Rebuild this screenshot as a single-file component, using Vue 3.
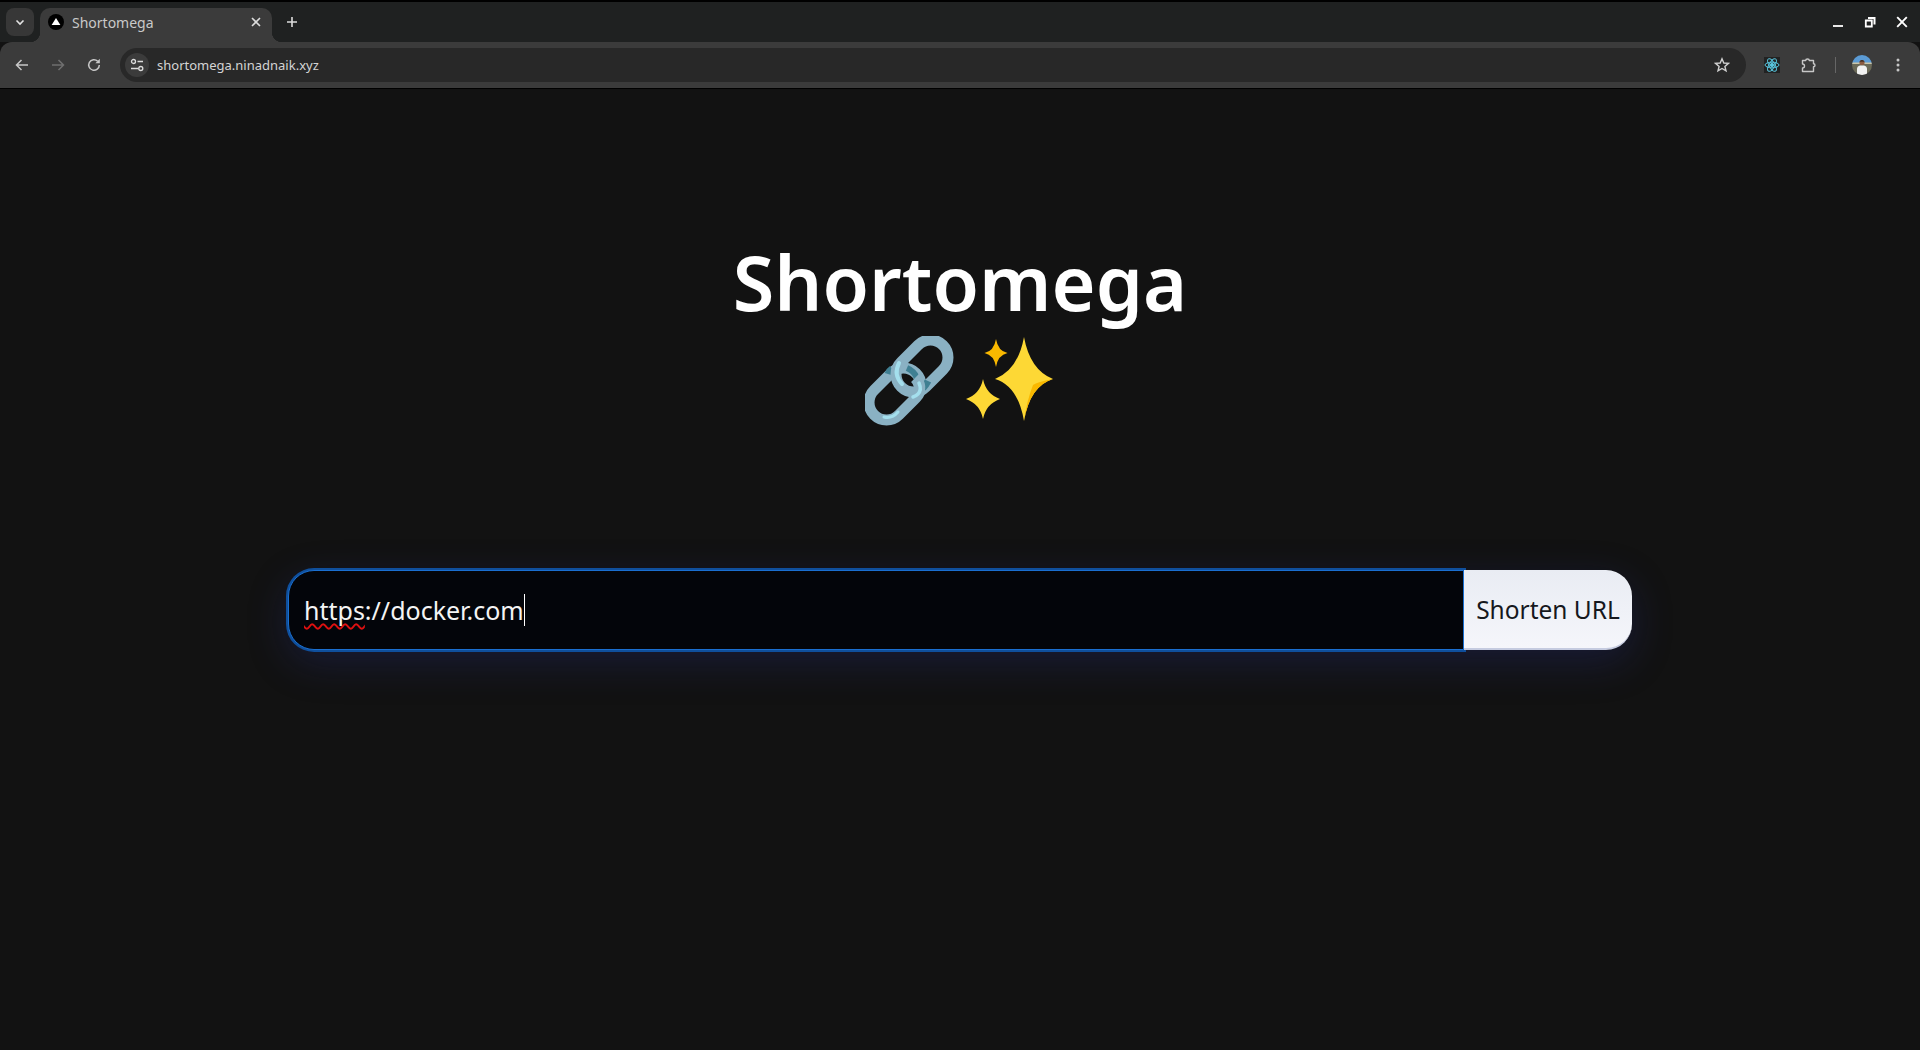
<template>
  <div class="window">
    <header class="tabstrip">
      <button class="tab-search">
        <svg viewBox="0 0 16 16" width="16" height="16"><path d="M4.500 6.500 8 10l3.500-3.500" fill="none" stroke="#e3e3e3" stroke-width="1.600"/></svg>
      </button>
      <div class="tab">
        <span class="favicon"><svg viewBox="0 0 16 16" width="16" height="16"><circle cx="8" cy="8" r="8" fill="#000"/><path d="M8 4 12.400 11H3.600z" fill="#fff"/></svg></span>
        <span class="tab-title">Shortomega</span>
        <svg class="tab-close" viewBox="0 0 16 16" width="16" height="16"><path d="M4 4l8 8M12 4l-8 8" stroke="#dcdcdc" stroke-width="1.600"/></svg>
      </div>
      <svg class="new-tab" viewBox="0 0 16 16" width="16" height="16"><path d="M8 3v10M3 8h10" stroke="#dcdcdc" stroke-width="1.600"/></svg>
      <div class="window-controls">
        <svg viewBox="0 0 12 12" width="12" height="12"><path d="M1 10h10" stroke="#fff" stroke-width="1.800"/></svg>
        <svg viewBox="0 0 12 12" width="12" height="12"><path d="M1.800 4.500h6v6h-6z" fill="none" stroke="#fff" stroke-width="1.800"/><path d="M4 1h7.500v7.500H9.500V3H4z" fill="#fff"/></svg>
        <svg viewBox="0 0 12 12" width="12" height="12"><path d="M1.200 1.200l9.600 9.600M10.800 1.200 1.200 10.800" stroke="#fff" stroke-width="1.900"/></svg>
      </div>
    </header>

    <nav class="toolbar">
      <svg viewBox="0 0 16 16" width="16" height="16"><path d="M14 8H3M7.500 3 2.500 8l5 5" fill="none" stroke="#c7c7c7" stroke-width="1.500"/></svg>
      <svg viewBox="0 0 16 16" width="16" height="16"><path d="M2 8h11M8.500 3l5 5-5 5" fill="none" stroke="#6f6f6f" stroke-width="1.500"/></svg>
      <svg viewBox="0 0 16 16" width="16" height="16"><path d="M13.300 8A5.300 5.300 0 1 1 11.700 4.200" fill="none" stroke="#c7c7c7" stroke-width="1.500"/><path d="M13.800 1.800v4.400H9.400z" fill="#c7c7c7"/></svg>
      <div class="omnibox">
        <span class="site-info">
          <svg viewBox="0 0 16 16" width="16" height="16" fill="none" stroke="#dcdcdc" stroke-width="1.300"><circle cx="4.500" cy="4.500" r="2"/><path d="M8.500 4.500H14M2 11.500h7.500"/><circle cx="11.800" cy="11.500" r="2"/></svg>
        </span>
        <span class="url">shortomega.ninadnaik.xyz</span>
        <svg class="star" viewBox="0 0 16 16" width="16" height="16"><path d="M8 1.800 9.800 6l4.600.4-3.500 3 1.100 4.500L8 11.500l-4 2.400 1.100-4.500-3.500-3L6.200 6z" fill="none" stroke="#d0d0d0" stroke-width="1.400"/></svg>
      </div>
      <span class="ext-react">
        <svg viewBox="0 0 16 16" width="16" height="16" fill="none" stroke="#58c4dc" stroke-width="1"><circle cx="8" cy="8" r="1.600" fill="#58c4dc"/><ellipse cx="8" cy="8" rx="7" ry="2.800"/><ellipse cx="8" cy="8" rx="7" ry="2.800" transform="rotate(60 8 8)"/><ellipse cx="8" cy="8" rx="7" ry="2.800" transform="rotate(120 8 8)"/></svg>
      </span>
      <svg class="ext-puzzle" viewBox="0 0 16 16" width="16" height="16"><path d="M1.500 3.500h3.200a1.800 1.500 0 0 1 3.600 0h4.200v3.200a1.500 1.500 0 0 1 0 3v4.800H1.500v-3.500a1.500 1.500 0 0 0 0-4z" fill="none" stroke="#c7c7c7" stroke-width="1.400" stroke-linejoin="round"/></svg>
      <span class="divider"></span>
      <span class="avatar">
        <svg viewBox="0 0 20 20" width="20" height="20">
          <rect width="20" height="9" fill="#5b9bd5"/>
          <rect y="8" width="20" height="12" fill="#6b6a58"/>
          <rect y="7.500" width="20" height="1.500" fill="#c9c4a8"/>
          <path d="M5 20v-6q0-3 3-3.500h4q3 .5 3 3.500v6z" fill="#f2f2f2"/>
          <circle cx="10" cy="7.500" r="2.600" fill="#8a5a40"/>
          <path d="M7.400 6.500q2.600-2.500 5.200 0z" fill="#221a16"/>
        </svg>
      </span>
      <svg class="menu" viewBox="0 0 16 16" width="16" height="16"><circle cx="8" cy="3" r="1.500" fill="#c7c7c7"/><circle cx="8" cy="8" r="1.500" fill="#c7c7c7"/><circle cx="8" cy="13" r="1.500" fill="#c7c7c7"/></svg>
    </nav>

    <main class="page">
      <h1 class="title">
        <span>Shortomega</span>
        <span class="emoji-row">
          <svg class="link-emoji" viewBox="0 0 90 90" width="90" height="90" fill="none">
            <rect x="12.500" y="28.500" width="35" height="59" rx="17.500" transform="rotate(45 30 58)" stroke="#8ab1c3" stroke-width="11"/>
            <path d="M27 33q-3 2-4 5" stroke="#3f7f92" stroke-width="7"/>
            <rect x="39.500" y="0.500" width="35" height="59" rx="17.500" transform="rotate(45 57 30)" stroke="#8ab1c3" stroke-width="11"/>
            <path d="M63 45q-2 4-5 7" stroke="#3f7f92" stroke-width="7"/>
            <path d="M42 32q7 3 10 10" stroke="#3f7f92" stroke-width="6"/>
            <path d="M50 42q8 8 2 17-2 3-6 5" stroke="#8ab1c3" stroke-width="11"/>
            <path d="M34 27q-6 12 3 21" stroke="#a4dfed" stroke-width="4" stroke-linecap="round"/>
            <path d="M54 47q3 7-1 11-2 2-5 3" stroke="#a4dfed" stroke-width="3.500" stroke-linecap="round"/>
            <path d="M19 81q8 2 14-5" stroke="#a4dfed" stroke-width="3" stroke-linecap="round"/>
          </svg>
          <svg class="sparkle-emoji" viewBox="0 0 90 90" width="90" height="90">
            <path d="M59 1Q65 34 88 43 65 50 59 85 53 50 30 43 53 34 59 1z" fill="#fdd835"/>
            <path d="M59 85Q65 50 88 43 72 46 68 49 62 64 59 85z" fill="#f9b800"/>
            <path d="M31 3Q33 15 42.500 17 33 19 31 31 29 19 19.500 17 29 15 31 3z" fill="#f9b800"/>
            <path d="M18 43Q21 58 35 63 21 68 18 83 15 68 1 63 15 58 18 43z" fill="#fdd835"/>
          </svg>
        </span>
      </h1>

      <form class="shorten-form" @submit.prevent>
        <div class="url-input"><span class="misspelt">https</span>://docker.com<span class="caret"></span></div>
        <button class="shorten-btn" type="button">Shorten URL</button>
      </form>
    </main>
  </div>
</template>

<script setup>
</script>

<style>
html, body {
  margin: 0;
  background: #121212;
}
</style>

<style scoped>
.window {
  height: 1050px;
  display: flex;
  flex-direction: column;
  overflow: hidden;
  font-family: "Noto Sans", "Open Sans", sans-serif;
  background: #121212;
}

.tabstrip {
  height: 40px;
  border-top: 2px solid #000;
  background: #1f2121;
  display: flex;
  align-items: flex-start;
  padding-left: 6px;
  color: #dcdcdc;
}

.tab-search {
  width: 28px;
  height: 28px;
  margin-top: 6px;
  padding: 0;
  border: none;
  border-radius: 8px;
  background: #373737;
  display: flex;
  align-items: center;
  justify-content: center;
}

.tab {
  position: relative;
  width: 232px;
  height: 34px;
  margin: 6px 0 0 6px;
  padding: 0 8px;
  box-sizing: border-box;
  background: #3b3b3b;
  border-radius: 10px 10px 0 0;
  display: flex;
  align-items: center;
  font-size: 14px;
}

.tab::before,
.tab::after {
  content: "";
  position: absolute;
  bottom: 0;
  width: 10px;
  height: 10px;
}

.tab::before {
  left: -10px;
  background: radial-gradient(circle at 0 0, transparent 10px, #3b3b3b 10.5px);
}

.tab::after {
  right: -10px;
  background: radial-gradient(circle at 100% 0, transparent 10px, #3b3b3b 10.5px);
}

.favicon {
  display: flex;
  margin-right: 8px;
  margin-top: -6px;
}

.tab-title {
  flex: 1;
  margin-top: -6px;
  color: #c9c9c9;
}

.tab-close {
  margin-top: -6px;
}

.new-tab {
  margin: 12px 0 0 12px;
}

.window-controls {
  margin-left: auto;
  margin-right: 12px;
  margin-top: 14px;
  display: flex;
  gap: 20px;
}

.toolbar {
  height: 46px;
  background: #3b3b3b;
  border-radius: 12px 12px 0 0;
  display: flex;
  align-items: center;
  padding-left: 14px;
  gap: 20px;
  border-bottom: 1px solid #000;
}

.omnibox {
  width: 1626px;
  height: 34px;
  margin-left: -2px;
  box-sizing: border-box;
  border-radius: 17px;
  background: #282828;
  display: flex;
  align-items: center;
  padding: 0 5px;
  font-size: 13px;
  color: #d4d4d4;
}

.site-info {
  width: 24px;
  height: 24px;
  border-radius: 50%;
  background: #3b3b3b;
  display: flex;
  align-items: center;
  justify-content: center;
  margin-right: 8px;
}

.url {
  flex: 1;
}

.star {
  margin-right: 11px;
}

.ext-react {
  width: 16px;
  height: 16px;
  background: #222;
  display: flex;
  margin-left: -2px;
}

.ext-puzzle {
  margin-left: 1px;
}

.divider {
  width: 1px;
  height: 16px;
  margin-left: -2px;
  background: #666;
}

.avatar {
  width: 20px;
  height: 20px;
  border-radius: 50%;
  overflow: hidden;
  display: flex;
  margin-left: -4px;
}

.menu {
  margin-left: -2px;
}

.page {
  flex: 1;
  display: flex;
  flex-direction: column;
  align-items: center;
  background: #121212;
}

.title {
  margin: 148px 0 0;
  display: flex;
  flex-direction: column;
  align-items: center;
  color: #fff;
  font-size: 75.5px;
  font-weight: 600;
  line-height: 90px;
}

.emoji-row {
  display: flex;
  gap: 10px;
  height: 90px;
  margin-top: 9px;
}

.shorten-form {
  width: 1344px;
  height: 80px;
  margin-top: 144px;
  display: flex;
  border-radius: 26px;
  box-shadow: 0 12px 40px rgba(40, 50, 140, 0.3);
}

.url-input {
  flex: 1;
  box-sizing: border-box;
  background: #03050a;
  border: 1px solid #1a6fd0;
  border-radius: 26px 0 0 26px;
  box-shadow: 0 0 0 2px #0f4f9c;
  padding: 0 15px;
  display: flex;
  align-items: center;
  font-size: 25px;
  color: #f4f4f4;
  white-space: pre;
}

.misspelt {
  text-decoration: underline wavy #e01010 1.500px;
  text-decoration-skip-ink: none;
  text-underline-offset: 3px;
}

.caret {
  width: 1px;
  height: 32px;
  background: #fff;
}

.shorten-btn {
  width: 168px;
  box-sizing: border-box;
  padding: 0;
  border: none;
  border-bottom: 2px solid #c5cbe0;
  border-radius: 0 26px 26px 0;
  background: linear-gradient(#e9ecf3, #f5f6fb);
  color: #16181d;
  font-family: inherit;
  font-size: 24.500px;
}
</style>
